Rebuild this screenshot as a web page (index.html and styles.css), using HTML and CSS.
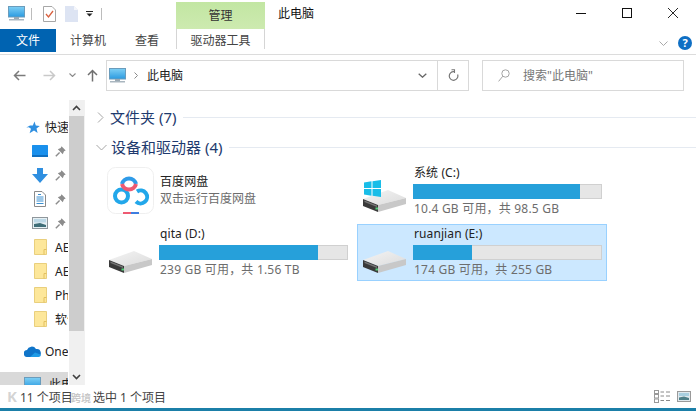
FILE: index.html
```html
<!DOCTYPE html>
<html lang="zh-CN">
<head>
<meta charset="utf-8">
<title>此电脑</title>
<link rel="stylesheet" href="styles.css">
</head>
<body>
<svg width="0" height="0" class="defs">
  <defs>
    <linearGradient id="scr" x1="0" y1="0" x2="0" y2="1"><stop offset="0" stop-color="#7fd0f5"/><stop offset="1" stop-color="#2a9ae0"/></linearGradient>
    <linearGradient id="top" x1="0" y1="0" x2="1" y2="1"><stop offset="0" stop-color="#f4f4f4"/><stop offset="1" stop-color="#dcdcdc"/></linearGradient>
    <symbol id="pc" viewBox="0 0 17 15"><rect x="0.500" y="0.500" width="16" height="10.500" fill="url(#scr)" stroke="#6a9cbc"/><rect x="6" y="11" width="5" height="2" fill="#9aa8b2"/><rect x="1" y="13" width="15" height="1.500" fill="#a9b6bf"/></symbol>
    <symbol id="pin" viewBox="0 0 11 11"><path d="M6.500 0.300 10.700 4.500 9 5.300 7.800 8.200 2.800 3.200 5.700 2Z" fill="#8c8c8c"/><path d="M4.600 6.400 0.800 10.200" stroke="#8c8c8c" stroke-width="1.400"/></symbol>
    <symbol id="folder" viewBox="0 0 13 16"><path d="M0.500 0.500H12.500V15.500H0.500Z" fill="#fde79a" stroke="#e9cf7d"/><path d="M10 15.500V10.500H12.500" fill="none" stroke="#e3c061"/></symbol>
    <symbol id="disk" viewBox="0 0 43 22"><path d="M0 9 25 0 43 8 15 15Z" fill="url(#top)"/><path d="M0 9 15 15V22L0 16Z" fill="#3a3a3a"/><path d="M1.500 10.500 14 15.500V17L1.500 12Z" fill="#777"/><path d="M15 15 43 8V14L15 22Z" fill="#c8c8c8"/><rect x="12.500" y="17.500" width="2.500" height="2" fill="#55d07a"/></symbol>
  </defs>
</svg>
<div class="window">
  <header class="titlebar">
    <div class="qat">
      <svg class="ic-pc"><use href="#pc"/></svg>
      <span class="qat-sep"></span>
      <svg class="ic-doc" viewBox="0 0 13 16"><path d="M0.500 0.500H9L12.500 4V15.500H0.500Z" fill="#fff" stroke="#a7a7a7"/><path d="M3 8 5.500 11 10 5" fill="none" stroke="#d9603f" stroke-width="1.300"/></svg>
      <svg class="ic-newdoc" viewBox="0 0 13 16"><path d="M0 0H9L13 4V16H0Z" fill="#dde4f3"/><path d="M9 0 13 4H9Z" fill="#f4f6fb"/></svg>
      <svg class="ic-drop" viewBox="0 0 7 6"><rect width="7" height="1" fill="#222"/><path d="M0.500 2.500H6.500L3.500 5.500Z" fill="#222"/></svg>
      <span class="qat-sep sep-b"></span>
    </div>
    <div class="ctx-tab">管理</div>
    <div class="wintitle">此电脑</div>
    <div class="winbtns">
      <svg viewBox="0 0 10 10"><path d="M0 5.500H10" stroke="#111"/></svg>
      <svg viewBox="0 0 10 10"><rect x="0.500" y="0.500" width="9" height="9" fill="none" stroke="#111"/></svg>
      <svg viewBox="0 0 10 10"><path d="M0 0 10 10M10 0 0 10" stroke="#111" stroke-width="0.900"/></svg>
    </div>
  </header>

  <nav class="tabs">
    <div class="tab tab-file">文件</div>
    <div class="tab tab-pc">计算机</div>
    <div class="tab tab-view">查看</div>
    <div class="tab tab-drive">驱动器工具</div>
    <div class="tabs-right">
      <svg class="ic-collapse" viewBox="0 0 9 5"><path d="M0.500 0.500 4.500 4.500 8.500 0.500" fill="none" stroke="#a9a9a9"/></svg>
      <span class="help">?</span>
    </div>
  </nav>

  <div class="addressbar">
    <svg class="nav nav-back" viewBox="0 0 13 11"><path d="M12.500 5.500H1.500M6 1 1.500 5.500 6 10" fill="none" stroke="#7b7b7b" stroke-width="1.500"/></svg>
    <svg class="nav nav-fwd" viewBox="0 0 13 11"><path d="M0.500 5.500H11.500M7 1 11.500 5.500 7 10" fill="none" stroke="#c9c9c9" stroke-width="1.500"/></svg>
    <svg class="nav nav-down" viewBox="0 0 7 4"><path d="M0.500 0.500 3.500 3.500 6.500 0.500" fill="none" stroke="#8a8a8a" stroke-width="1.100"/></svg>
    <svg class="nav nav-up" viewBox="0 0 11 13"><path d="M5.500 12.500V1.500M1 6 5.500 1.500 10 6" fill="none" stroke="#6f6f6f" stroke-width="1.500"/></svg>
    <div class="addr">
      <svg class="ic-pc"><use href="#pc"/></svg>
      <svg class="crumb" viewBox="0 0 4 7"><path d="M0.500 0.500 3.500 3.500 0.500 6.500" fill="none" stroke="#8a8a8a"/></svg>
      <span class="addr-text">此电脑</span>
      <svg class="addr-drop" viewBox="0 0 9 5"><path d="M0.700 0.700 4.500 4.200 8.300 0.700" fill="none" stroke="#666" stroke-width="1.300"/></svg>
      <span class="refresh">
        <svg viewBox="0 0 11 12"><path d="M6 2.700A4.300 4.300 0 1 0 9.600 5.500" fill="none" stroke="#777" stroke-width="1.200"/><path d="M3.500 0.700H6.500V4" fill="none" stroke="#777" stroke-width="1.100"/></svg>
      </span>
    </div>
    <div class="search">
      <svg viewBox="0 0 12 13"><circle cx="7.500" cy="4.500" r="3.700" fill="none" stroke="#a4a4a4"/><path d="M4.800 7.200 0.600 12.400" stroke="#a4a4a4"/></svg>
      <span>搜索"此电脑"</span>
    </div>
  </div>

  <main class="body">
    <aside class="sidebar">
      <div class="tree">
        <div class="tree-row row-star">
          <svg class="i-star" viewBox="0 0 14 13"><path d="M8.500 0.500 9.800 4.600 13.800 4.900 10.500 7.600 11.600 12 8 9.500 3.600 12.300 5 7.800 2.800 6.200 0.300 6.500 4 4.600H6.800Z" fill="#2f8fe0"/></svg>
          <span>快速访问</span>
        </div>
        <div class="tree-row sub"><svg class="i-desk" viewBox="0 0 16 12"><rect width="16" height="11" rx="0.500" fill="#1a90ec"/><rect y="10" width="16" height="2" fill="#0f6fc0"/></svg><svg class="i-pin"><use href="#pin"/></svg></div>
        <div class="tree-row sub"><svg class="i-dl" viewBox="0 0 16 15"><path d="M5 0H11V6H16L8 15 0 6H5Z" fill="#2f8fe0"/></svg><svg class="i-pin"><use href="#pin"/></svg></div>
        <div class="tree-row sub"><svg class="i-docs" viewBox="0 0 12 16"><path d="M0.500 0.500H8L11.500 4V15.500H0.500Z" fill="#fff" stroke="#8a8a8a"/><path d="M4 3.500H7M2.500 6H9.500M2.500 8H9.500M2.500 10H9.500M2.500 12.500H9.500" stroke="#3a8fd0"/></svg><svg class="i-pin"><use href="#pin"/></svg></div>
        <div class="tree-row sub"><svg class="i-pics" viewBox="0 0 16 12"><rect x="0.500" y="0.500" width="15" height="11" fill="#e6f0f4" stroke="#8f979c"/><path d="M2 7 8 6 14 8V10H2Z" fill="#3f6e78"/><rect x="2" y="2" width="12" height="3.500" fill="#bcd8e6"/></svg><svg class="i-pin"><use href="#pin"/></svg></div>
        <div class="tree-row sub"><svg class="i-folder"><use href="#folder"/></svg><span>AE</span></div>
        <div class="tree-row sub"><svg class="i-folder"><use href="#folder"/></svg><span>AE</span></div>
        <div class="tree-row sub"><svg class="i-folder"><use href="#folder"/></svg><span>Photoshop</span></div>
        <div class="tree-row sub"><svg class="i-folder"><use href="#folder"/></svg><span>软件</span></div>
        <div class="tree-row row-one"><svg class="i-cloud" viewBox="0 0 17 11"><path d="M3.500 11A3.500 3.500 0 0 1 3 4 5 5 0 0 1 12 3 4 4 0 0 1 13.500 11Z" fill="#0f74c9"/><path d="M6 11 11 6.500 16.500 8.500C17.300 10 16 11 14 11Z" fill="#1f9be6"/></svg><span>OneDrive</span></div>
        <div class="tree-row row-pc"><svg class="ic-pc"><use href="#pc"/></svg><span>此电脑</span></div>
      </div>
      <div class="scrollbar">
        <svg class="arrow" viewBox="0 0 9 6"><path d="M1 5 4.500 1.500 8 5" fill="none" stroke="#404040" stroke-width="1.600"/></svg>
        <div class="thumb"></div>
        <svg class="arrow" viewBox="0 0 9 6"><path d="M1 1 4.500 4.500 8 1" fill="none" stroke="#404040" stroke-width="1.600"/></svg>
      </div>
    </aside>

    <section class="content">
      <div class="group">
        <svg class="chev" viewBox="0 0 7 11"><path d="M1 0.500 6 5.500 1 10.500" fill="none" stroke="#a6a6a6"/></svg>
        <span class="group-name">文件夹 (7)</span><span class="rule"></span>
      </div>
      <div class="group group-open">
        <svg class="chev chev-open" viewBox="0 0 11 7"><path d="M0.500 1 5.500 6 10.500 1" fill="none" stroke="#a6a6a6"/></svg>
        <span class="group-name">设备和驱动器 (4)</span><span class="rule"></span>
      </div>
      <div class="drives">
        <article class="drive drive-app">
          <svg class="baidu" viewBox="0 0 47 47">
            <rect x="0.500" y="0.500" width="46" height="46" rx="8" fill="#fff" stroke="#efefef"/>
            <circle cx="14.500" cy="29" r="6.500" fill="none" stroke="#22a7ea" stroke-width="4"/>
            <path d="M29 34.500A6.500 6.500 0 1 0 30 24.500" fill="none" stroke="#22a7ea" stroke-width="4"/>
            <path d="M15 17A7.200 7.200 0 0 1 29 17" fill="none" stroke="#2f9be8" stroke-width="4"/>
            <path d="M15 17A7.200 7.200 0 0 0 29 17" fill="none" stroke="#ee5a72" stroke-width="4"/>
            <rect x="16" y="45" width="8" height="2" fill="#ee5a72"/><rect x="24" y="45" width="8" height="2" fill="#3d7ee0"/>
          </svg>
          <div class="drive-info">
            <div class="drive-name">百度网盘</div>
            <div class="drive-free app-sub">双击运行百度网盘</div>
          </div>
        </article>
        <article class="drive">
          <div class="disk-wrap">
            <svg class="winlogo" viewBox="0 0 17 17"><path d="M0 2.500 7.500 1.300V8H0ZM8.500 1.200 17 0V8H8.500ZM0 9H7.500V15.700L0 14.500ZM8.500 9H17V17L8.500 15.800Z" fill="#19bde8"/></svg>
            <svg class="disk"><use href="#disk"/></svg>
          </div>
          <div class="drive-info">
            <div class="drive-name">系统 (C:)</div>
            <div class="bar"><div class="fill" style="width:89.500%"></div></div>
            <div class="drive-free">10.4 GB 可用，共 98.5 GB</div>
          </div>
        </article>
        <article class="drive">
          <div class="disk-wrap"><svg class="disk"><use href="#disk"/></svg></div>
          <div class="drive-info">
            <div class="drive-name">qita (D:)</div>
            <div class="bar"><div class="fill" style="width:84.800%"></div></div>
            <div class="drive-free">239 GB 可用，共 1.56 TB</div>
          </div>
        </article>
        <article class="drive selected">
          <div class="disk-wrap"><svg class="disk"><use href="#disk"/></svg></div>
          <div class="drive-info">
            <div class="drive-name">ruanjian (E:)</div>
            <div class="bar"><div class="fill" style="width:31.800%"></div></div>
            <div class="drive-free">174 GB 可用，共 255 GB</div>
          </div>
        </article>
      </div>
    </section>
  </main>

  <footer class="status">
    <span class="count">11 个项目</span>
    <span class="sel">选中 1 个项目</span>
    <span class="wm-logo">K</span>
    <span class="wm-text">跨境</span>
    <div class="views">
      <svg viewBox="0 0 16 13"><rect x="0.500" y="0.500" width="4" height="3" fill="none" stroke="#999"/><rect x="0.500" y="4.500" width="4" height="3.500" fill="none" stroke="#999"/><rect x="0.500" y="9" width="4" height="3.500" fill="none" stroke="#999"/><path d="M6.500 2H10M12 2H16M6.500 6H10M12 6H16M6.500 10.500H10M12 10.500H16" stroke="#8a8a8a"/></svg>
      <svg viewBox="0 0 14 11"><rect x="0.500" y="0.500" width="13" height="10" fill="#dfe9ee" stroke="#9a9a9a"/><rect x="2" y="2" width="10" height="3" fill="#a8cfe0"/><path d="M2 6.500 7 5.500 12 7V9H2Z" fill="#4d7f88"/></svg>
    </div>
  </footer>
  <div class="accent"></div>
</div>
</body>
</html>
```
FILE: styles.css
```css
* { box-sizing: border-box; }
html, body { margin: 0; padding: 0; }
body {
  width: 696px; height: 411px; overflow: hidden; background: #fff; color: #222;
  font-family: "Noto Sans", "Noto Sans CJK SC", sans-serif; font-size: 12px;
}
.defs { position: absolute; }
svg { display: block; flex: none; }
.window { width: 696px; height: 411px; display: flex; flex-direction: column; }

.titlebar { height: 29px; display: flex; align-items: flex-start; flex: none; }
.qat { width: 176px; height: 27px; display: flex; align-items: center; padding-left: 8px; }
.ic-pc { width: 17px; height: 15px; }
.qat-sep { width: 1px; height: 12px; background: #bcbcbc; margin-left: 6px; }
.ic-doc { width: 13px; height: 16px; margin-left: 11px; }
.ic-newdoc { width: 13px; height: 16px; margin-left: 9px; }
.ic-drop { width: 7px; height: 6px; margin-left: 8px; margin-top: 1px; }
.sep-b { margin-left: 8px; }
.ctx-tab {
  width: 89px; height: 27px; margin-top: 2px; background: linear-gradient(#c2e6a2, #cdeab0);
  text-align: center; line-height: 27px; font-size: 12px; color: #333;
}
.wintitle { margin-left: 13px; line-height: 27px; font-size: 12px; color: #111; }
.winbtns { margin-left: auto; display: flex; gap: 36px; padding: 8px 18px 0 0; }
.winbtns svg { width: 10px; height: 10px; }

.tabs { height: 26px; display: flex; flex: none; border-bottom: 1px solid #dcdcdc; position: relative; }
.tab { height: 23px; line-height: 24px; font-size: 12px; color: #444; text-align: center; }
.tab-file { width: 56px; background: #0063b1; color: #fff; }
.tab-pc { width: 64px; }
.tab-view { width: 54px; margin-right: 2px; }
.tab-drive { width: 89px; height: 20px; line-height: 24px; border-left: 1px solid #d5d5d5; border-right: 1px solid #d5d5d5; }
.tabs-right { margin-left: auto; display: flex; align-items: center; gap: 10px; height: 28px; padding-right: 4px; }
.ic-collapse { width: 9px; height: 5px; }
.help {
  width: 14px; height: 14px; border-radius: 50%; background: #0f6fc4; color: #fff; text-align: center;
  font-size: 11px; font-weight: 700; line-height: 14px;
}

.addressbar { height: 45px; flex: none; display: flex; align-items: center; padding-bottom: 5px; position: relative; }
.nav { flex: none; }
.nav-back { width: 13px; height: 11px; margin-left: 13px; }
.nav-fwd { width: 13px; height: 11px; margin-left: 17px; }
.nav-down { width: 7px; height: 4px; margin-left: 13px; }
.nav-up { width: 11px; height: 13px; margin-left: 11px; }
.addr {
  width: 363px; height: 31px; margin-left: 8px; border: 1px solid #d9d9d9; display: flex; align-items: center;
  padding-left: 2px;
}
.crumb { width: 4px; height: 7px; margin-left: 8px; }
.addr-text { margin-left: 9px; font-size: 12px; color: #222; }
.addr-drop { width: 9px; height: 5px; margin-left: auto; margin-right: 10px; }
.refresh { width: 31px; height: 29px; border-left: 1px solid #d9d9d9; display: flex; align-items: center; justify-content: center; }
.refresh svg { width: 11px; height: 12px; }
.search {
  width: 202px; height: 31px; margin-left: 13px; border: 1px solid #d9d9d9; display: flex; align-items: center;
  padding-left: 15px; gap: 13px; color: #777; font-size: 12px;
}
.search svg { width: 12px; height: 13px; }

.body { flex: 1; min-height: 0; display: flex; }
.sidebar { width: 85px; flex: none; position: relative; overflow: hidden; border-right: 1px solid #f1f1f1; }
.tree { width: 68px; overflow: hidden; padding-top: 15px; }
.tree-row { height: 24px; display: flex; align-items: center; white-space: nowrap; font-size: 12px; color: #222; }
.row-star { padding-left: 26px; gap: 5px; height: 24px; }
.i-star { width: 14px; height: 13px; }
.sub { padding-left: 32px; }
.i-desk { width: 16px; height: 12px; }
.i-dl { width: 16px; height: 15px; }
.i-docs { width: 12px; height: 16px; margin: 0 2px; }
.i-pics { width: 16px; height: 12px; }
.i-pin { width: 11px; height: 11px; margin-left: 7px; }
.i-folder { width: 13px; height: 16px; margin-right: 8px; margin-left: 2px; }
.row-one { padding-left: 24px; gap: 4px; margin-top: 9px; height: 22px; }
.i-cloud { width: 17px; height: 11px; }
.row-pc { padding-left: 24px; gap: 8px; margin-top: 10px; height: 24px; width: 68px; background: #d9d9d9; }
.scrollbar { position: absolute; left: 69px; top: 0; bottom: 0; width: 15px; background: #f0f0f0; display: flex; flex-direction: column; align-items: center; }
.thumb { width: 15px; height: 215px; background: #cdcdcd; margin-top: 5px; }
.arrow { width: 9px; height: 6px; margin-top: 5px; }
.scrollbar .arrow:last-child { margin-top: 43px; }

.content { flex: 1; min-width: 0; padding: 0 0 0 11px; }
.group { display: flex; align-items: center; height: 22px; margin-top: 6px; font-size: 15px; color: #1e3a6e; }
.group-open { margin-top: 8px; }
.chev { width: 7px; height: 11px; margin-left: 1px; margin-right: 6px; }
.chev-open { width: 11px; height: 7px; margin-left: 0; margin-right: 4px; }
.group-name { line-height: 22px; white-space: nowrap; }
.rule { flex: 1; height: 1px; background: #e5eaf1; margin-left: 7px; }
.drives { display: grid; grid-template-columns: 250px 250px; column-gap: 4px; margin-top: 5px; margin-left: 7px; grid-template-rows: 55px 57px; row-gap: 6px; }
.drive { display: flex; border: 1px solid transparent; padding-top: 1px; }
.selected { background: #cce8ff; border-color: #99d1ff; }
.baidu { width: 47px; height: 47px; margin: 2px 0 0 3px; }
.drive-app .drive-info { margin-left: 5px; padding-top: 9px; }
.disk-wrap { width: 55px; padding: 25px 0 0 5px; position: relative; flex: none; }
.disk { width: 43px; height: 22px; }
.winlogo { width: 17px; height: 17px; position: absolute; left: 6px; top: 15px; }
.drive-info { flex: 1; min-width: 0; padding-right: 4px; }
.drive-name { line-height: 16px; font-size: 12px; color: #222; white-space: nowrap; letter-spacing: .1px; padding-left: 1px; }
.bar { height: 15px; background: #e6e6e6; border: 1px solid #d0d0d0; margin-top: 3px; }
.fill { height: 100%; background: #26a0da; margin: -1px 0 0 -1px; box-sizing: content-box; padding-bottom: 2px; }
.drive-free { line-height: 16px; margin-top: 2px; font-size: 12px; color: #6d6d6d; white-space: nowrap; letter-spacing: .2px; padding-left: 1px; }
.app-sub { margin-top: 1px; letter-spacing: 0; }

.status { height: 23px; flex: none; display: flex; align-items: center; font-size: 12px; color: #444; background: #fff; position: relative; z-index: 1; padding-left: 20px; }
.count { width: 73px; white-space: nowrap; }
.wm-logo { position: absolute; left: 7px; top: 1px; font-size: 15px; font-weight: 700; color: rgba(175,175,175,.55); }
.wm-text { position: absolute; left: 71px; top: 5px; font-size: 10px; font-weight: 700; color: rgba(175,175,175,.7); white-space: nowrap; }
.views { margin-left: auto; display: flex; gap: 7px; align-items: center; padding-right: 5px; }
.views svg:first-child { width: 16px; height: 13px; }
.views svg:last-child { width: 14px; height: 11px; }
.accent { height: 3px; flex: none; background: #1b7fa8; }
```
